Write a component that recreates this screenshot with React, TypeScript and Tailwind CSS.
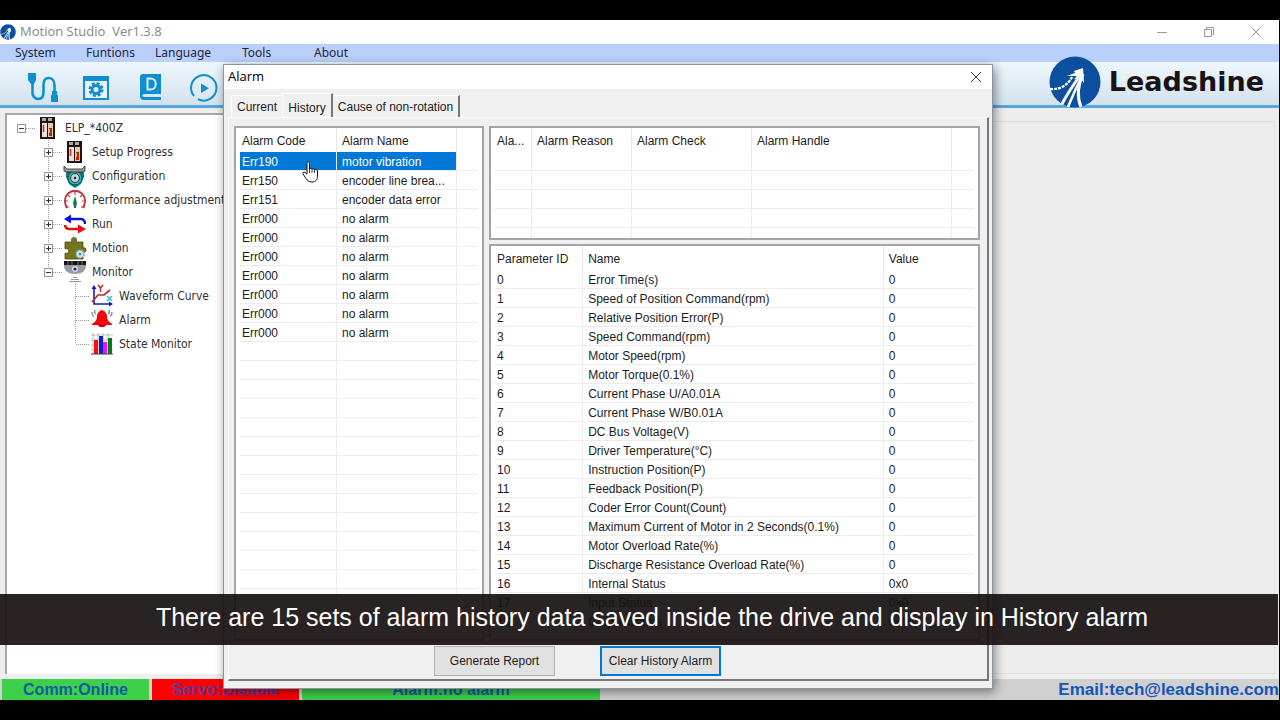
import type { ReactNode } from "react";
import clsx from "clsx";

const menuItems = [
  { label: "System", width: "w-[71px]" },
  { label: "Funtions", width: "w-[69px]" },
  { label: "Language", width: "w-[87px]" },
  { label: "Tools", width: "w-[72px]" },
  { label: "About", width: "w-[72px]" },
];

const alarms = [
  ["Err190", "motor vibration"],
  ["Err150", "encoder line brea..."],
  ["Err151", "encoder data error"],
  ["Err000", "no alarm"],
  ["Err000", "no alarm"],
  ["Err000", "no alarm"],
  ["Err000", "no alarm"],
  ["Err000", "no alarm"],
  ["Err000", "no alarm"],
  ["Err000", "no alarm"],
];

const parameters = [
  ["0", "Error Time(s)", "0"],
  ["1", "Speed of Position Command(rpm)", "0"],
  ["2", "Relative Position Error(P)", "0"],
  ["3", "Speed Command(rpm)", "0"],
  ["4", "Motor Speed(rpm)", "0"],
  ["5", "Motor Torque(0.1%)", "0"],
  ["6", "Current Phase U/A0.01A", "0"],
  ["7", "Current Phase W/B0.01A", "0"],
  ["8", "DC Bus Voltage(V)", "0"],
  ["9", "Driver Temperature(°C)", "0"],
  ["10", "Instruction Position(P)", "0"],
  ["11", "Feedback Position(P)", "0"],
  ["12", "Coder Error Count(Count)", "0"],
  ["13", "Maximum Current of Motor in 2 Seconds(0.1%)", "0"],
  ["14", "Motor Overload Rate(%)", "0"],
  ["15", "Discharge Resistance Overload Rate(%)", "0"],
  ["16", "Internal Status", "0x0"],
  ["17", "Input Status", "0x0"],
  ["18", "Output Status", "0x0"],
];

function LogoMark({ className }: { className: string }) {
  return (
    <svg viewBox="0 0 52 52" className={className} aria-hidden="true">
      <circle cx="26" cy="26" r="25.5" fill="#0b4f9e" />
      <g fill="none" stroke="#fff">
        <path d="M13 48C18 38 25 28 32 18" strokeWidth="3" />
        <path d="M19 51C23 41 28 30 33 20" strokeWidth="2.5" />
        <path d="M32 51C27 39 29 29 34 18" strokeWidth="3" />
        <path d="M1 33C11 34 19 29 23 21" strokeWidth="2.4" strokeDasharray="3 1" />
      </g>
      <path d="M34 12L35 27L31 22L25 23L28 20L18 20L26 17L25 15Z" fill="#fff" />
    </svg>
  );
}

function CableIcon() {
  return (
    <svg viewBox="0 0 30 30" className="h-[30px] w-[30px]" fill="#0f8fd0" aria-hidden="true">
      <path d="M0 0h8v7l-2 4H3L0 7z" />
      <path
        d="M4.500 9v10a6 6 0 0 0 6 7c4 0 5-3 5-7V12c0-5 2-7 5-7s6 2 6 7v8"
        fill="none"
        stroke="#0f8fd0"
        strokeWidth="2.600"
      />
      <path d="M24 18h5v4h1v7h-7v-7h1z" />
    </svg>
  );
}

function SettingsIcon() {
  return (
    <svg viewBox="0 0 28 26" className="h-[26px] w-7" aria-hidden="true">
      <path d="M1 1h26v24H1z" fill="#0f8fd0" />
      <path d="M3 6h22v17H3z" fill="#e6f1f9" />
      <circle cx="14" cy="14.500" r="6" fill="none" stroke="#0f8fd0" strokeWidth="3" strokeDasharray="2.800 1.900" />
      <circle cx="14" cy="14.500" r="4" fill="none" stroke="#0f8fd0" strokeWidth="3" />
    </svg>
  );
}

function BookIcon() {
  return (
    <svg viewBox="0 0 22 27" className="h-[27px] w-[22px]" aria-hidden="true">
      <path d="M3 0h18v20H4c-2 0-2 3 0 3h17v3H4c-3 0-4-2-4-4V3c0-2 1-3 3-3z" fill="#0f8fd0" />
      <path d="M4 21.500h17" stroke="#d8ebf7" strokeWidth="1" />
      <path d="M7.500 4.500h3c7 0 7 11 0 11h-3z" fill="none" stroke="#d8ebf7" strokeWidth="2" />
    </svg>
  );
}

function PlayIcon() {
  return (
    <svg viewBox="0 0 28 28" className="h-7 w-7" aria-hidden="true">
      <path d="M4 22A12.700 12.700 0 1 1 8 25.200" fill="none" stroke="#0f8fd0" strokeWidth="2" />
      <path d="M11 9.500v9.500l8-4.750z" fill="#0f8fd0" />
    </svg>
  );
}

function DriveIcon() {
  return (
    <svg viewBox="0 0 24 24" className="h-6 w-6" aria-hidden="true">
      <path d="M4 1h15v22H4z" fill="#1c1512" />
      <path d="M6 7h5v14H6z" fill="#e8e0dc" />
      <path d="M12 7h5v14h-5z" fill="#d9cfb4" />
      <path d="M6 2h4v3H6zM12 2h4v3h-4z" fill="#aaa" />
      <path d="M7.500 9v7" stroke="#d22" strokeWidth="1.500" />
      <path d="M13 12h3v8h-3z" fill="#c22212" />
      <path d="M13.500 13v4" stroke="#e8b030" />
    </svg>
  );
}

function ConfigIcon() {
  return (
    <svg viewBox="0 0 24 24" className="h-6 w-6" aria-hidden="true">
      <path d="M3 8h18v5l-3 7-6 4-6-4-3-7z" fill="#0d7f80" />
      <circle cx="12" cy="14" r="7" fill="#35b5b5" stroke="#064a4c" />
      <circle cx="12" cy="14" r="4.500" fill="#bcd6d6" stroke="#234" />
      <circle cx="12" cy="14" r="1.200" fill="#223" />
      <path d="M1 2l3 3h15l3-3v5l-3 1H4L1 7z" fill="#9aa0a0" stroke="#222" strokeWidth=".8" />
    </svg>
  );
}

function GaugeIcon() {
  return (
    <svg viewBox="0 0 24 24" className="h-6 w-6" fill="none" aria-hidden="true">
      <path d="M4 20C-1 11 4 3 12 3s13 8 8 17" stroke="#b8323a" strokeWidth="1.800" />
      <path d="M12 3v4M5 7l2 2M19 7l-2 2M2 13h3M22 13h-3M2 19h4M22 19h-4" stroke="#c8404a" strokeWidth="1.200" />
      <path d="M12 8l2 7-1 5h-2l-1-5z" fill="#137a60" />
    </svg>
  );
}

function RunIcon() {
  return (
    <svg viewBox="0 0 24 24" className="h-6 w-6" fill="none" aria-hidden="true">
      <path d="M7 7h11c3 0 4 3 4 5" stroke="#1010e0" strokeWidth="2.400" />
      <path d="M8 2.500v9L1 7z" fill="#1010e0" />
      <path d="M2 13c0 2 2 4 4 4h10" stroke="#e81010" strokeWidth="2.600" />
      <path d="M15 12.500v9l8-4.500z" fill="#e81010" />
    </svg>
  );
}

function PuzzleIcon() {
  return (
    <svg viewBox="0 0 24 24" className="h-6 w-6" aria-hidden="true">
      <path
        d="M2 6h7c-3-6 7-6 4 0h7v6c4-2 4 6 0 4v7H2v-6c5 2 5-6 0-4z"
        fill="#75751b"
        stroke="#4d4d10"
        strokeWidth=".8"
      />
      <circle cx="17" cy="18" r="4" fill="#d6e7ea" stroke="#76a5b5" strokeWidth="1.500" strokeDasharray="2 1" />
      <circle cx="17" cy="18" r="1.500" fill="#5c92a8" />
    </svg>
  );
}

function CameraIcon() {
  return (
    <svg viewBox="0 0 24 24" className="h-6 w-6" aria-hidden="true">
      <path d="M1 5h22c0 6-4 9-11 9S1 11 1 5z" fill="#999ba0" />
      <path d="M1 1h22v4H1z" fill="#181414" />
      <path d="M5 1v4M9 1v4M15 1v4M19 1v4" stroke="#777" />
      <circle cx="12" cy="9" r="2.800" fill="#eee" />
      <circle cx="12" cy="9" r="1.600" fill="#15158a" />
      <path d="M10 17.500h4M8 19.500h8M6 21.500h12" stroke="#999" />
    </svg>
  );
}

function CurveIcon() {
  return (
    <svg viewBox="0 0 24 24" className="h-6 w-6" fill="none" aria-hidden="true">
      <path d="M4 2v18h18" stroke="#1818b8" strokeWidth="1.600" />
      <path d="M1.500 5L4 1l2.500 4zM19 17.500l4 2.500-4 2.500z" fill="#1818b8" />
      <path d="M2 18l6-7h6l6-5" stroke="#c02830" strokeWidth="1.700" />
      <path d="M8 1l2.500 3L13 1M10.500 4v4" stroke="#c02830" strokeWidth="1.500" />
      <path d="M17 12l5 5M22 12l-5 5" stroke="#35c5cc" strokeWidth="1.500" />
    </svg>
  );
}

function BellIcon() {
  return (
    <svg viewBox="0 0 24 24" className="h-6 w-6" aria-hidden="true">
      <path d="M12 2c3 1 5 3 5 7 0 3 2 5 5 7v1H2v-1c3-2 5-4 5-7 0-4 2-6 5-7z" fill="#f00808" />
      <path d="M8 17h8c-1 3-7 3-8 0z" fill="#c00" />
      <path d="M2 4c0 3 1 4 2 4M5 2c-1 2-1 3 1 4M22 4c0 3-1 4-2 4M19 2c1 2 1 3-1 4" fill="none" stroke="#76918e" strokeWidth="1.300" />
    </svg>
  );
}

function BarsIcon() {
  return (
    <svg viewBox="0 0 24 24" className="h-6 w-6" aria-hidden="true">
      <path d="M1 3h22M1 8h22M1 13h22M1 18h22M3 1v22M8 1v22M13 1v22M18 1v22" stroke="#aaa" strokeWidth=".7" />
      <path d="M4 8h4v14H4z" fill="#f01010" />
      <path d="M9 4h4v18H9z" fill="#1a1acc" />
      <path d="M13 10h4v12h-4z" fill="#f010f0" />
      <path d="M18 6h4v16h-4z" fill="#0a7a18" />
      <path d="M1 22h22" stroke="#444" />
    </svg>
  );
}

type Branch = "root" | "plus" | "minus" | "leaf" | "last";

// Dotted connector with the optional [+] / [-] box, one per tree row
function Connector({ branch }: { branch: Branch }) {
  const box = branch === "root" || branch === "plus" || branch === "minus";
  const top = branch === "root" ? 12 : 0;
  const bottom = branch === "root" || branch === "last" || branch === "minus" ? 12 : 24;
  return (
    <svg viewBox="0 0 28 24" className="h-6 w-7 shrink-0" fill="none" aria-hidden="true">
      <path d={`M13.500 ${top}V${bottom}M14 12.500H28`} stroke="#999" strokeDasharray="1 1" />
      {box && <path d="M9.500 8.500h8v8h-8z" fill="#fff" stroke="#919191" />}
      {box && <path d="M11 12.500h5" stroke="#334" />}
      {branch === "plus" && <path d="M13.500 10v5" stroke="#334" />}
    </svg>
  );
}

interface TreeRowProps {
  label: string;
  icon: ReactNode;
  branch: Branch;
  indent?: string;
}

function TreeRow({ label, icon, branch, indent }: TreeRowProps) {
  return (
    <li className={clsx("flex h-6 items-center", indent)}>
      <Connector branch={branch} />
      <span className="shrink-0">{icon}</span>
      <span className="pl-[5px] whitespace-nowrap">{label}</span>
    </li>
  );
}

function DeviceTree() {
  return (
    <ul className="pt-[1px] pl-[1px] font-['DejaVu_Sans_Condensed','Noto_Sans',sans-serif] text-[12px] text-[#303030]">
      <TreeRow label="ELP_*400Z" icon={<DriveIcon />} branch="root" />
      <TreeRow label="Setup Progress" icon={<DriveIcon />} branch="plus" indent="pl-[27px]" />
      <TreeRow label="Configuration" icon={<ConfigIcon />} branch="plus" indent="pl-[27px]" />
      <TreeRow label="Performance adjustment" icon={<GaugeIcon />} branch="plus" indent="pl-[27px]" />
      <TreeRow label="Run" icon={<RunIcon />} branch="plus" indent="pl-[27px]" />
      <TreeRow label="Motion" icon={<PuzzleIcon />} branch="plus" indent="pl-[27px]" />
      <TreeRow label="Monitor" icon={<CameraIcon />} branch="minus" indent="pl-[27px]" />
      <TreeRow label="Waveform Curve" icon={<CurveIcon />} branch="leaf" indent="pl-[54px]" />
      <TreeRow label="Alarm" icon={<BellIcon />} branch="leaf" indent="pl-[54px]" />
      <TreeRow label="State Monitor" icon={<BarsIcon />} branch="last" indent="pl-[54px]" />
    </ul>
  );
}

interface GridTableProps {
  label: string;
  columns: { title: string; width: string }[];
  rows: string[][];
  blankRows?: number;
  selected?: number;
  className?: string;
}

function GridTable({ label, columns, rows, blankRows = 0, selected, className }: GridTableProps) {
  const blanks = Array.from({ length: blankRows }, () => columns.map(() => ""));
  return (
    <div className={clsx("overflow-hidden border-2 border-[#a3a3a8] bg-white px-1", className)}>
      <table aria-label={label} className="w-full table-fixed border-separate border-spacing-0 text-left">
        <thead>
          <tr className="h-6">
            {columns.map((column, i) => (
              <th
                key={i}
                className={clsx(
                  "p-0 pt-px font-normal whitespace-nowrap",
                  column.width,
                  i === 0 ? "pl-[2px]" : "pl-[5px]",
                  i < columns.length - 1 && "border-r border-[#e6e6e6]"
                )}
              >
                {column.title}
              </th>
            ))}
          </tr>
        </thead>
        <tbody>
          {[...rows, ...blanks].map((row, r) => (
            <tr key={r} className="h-[19px]">
              {columns.map((_, i) => (
                <td
                  key={i}
                  className={clsx(
                    "h-[19px] border-b border-[#ececec] p-0 pt-[2px] leading-4 whitespace-nowrap",
                    i === 0 ? "pl-[2px]" : "pl-[5px]",
                    i < columns.length - 1 && "border-r",
                    r === selected && i < 2 && "bg-[#0078d7] text-white"
                  )}
                >
                  {row[i]}
                </td>
              ))}
            </tr>
          ))}
        </tbody>
      </table>
    </div>
  );
}

function HandCursor() {
  return (
    <svg viewBox="0 0 17 22" className="absolute top-[96px] left-[78px] h-[22px] w-[17px]" aria-hidden="true">
      <path
        d="M5 13V2.500c0-2 2.500-2 2.500 0V8c.5-1 2.500-1 2.500.5.500-1 2.500-1 2.500.5.500-1 2.500-1 3 .8V15c0 4-2 6-5.500 6S5.500 19.500 4 17.500L1 13c-1-1.500 1-2.500 2-1.500z"
        fill="#fff"
        stroke="#111"
      />
      <path d="M7.500 8v4M10 8.500V12M12.500 9v3" stroke="#111" strokeWidth=".8" />
    </svg>
  );
}

function AlarmDialog() {
  return (
    <section
      role="dialog"
      aria-label="Alarm"
      className="absolute top-16 bottom-[31px] left-[223px] flex w-[770px] flex-col border border-[#8c93a6] bg-[#f0f0f0] text-[12px] text-[#1c1c1c] shadow-[2px_3px_10px_rgba(0,0,0,0.45)]"
    >
      <header className="flex h-6 shrink-0 items-center justify-between bg-white pr-2 pl-1 font-['Open_Sans',sans-serif] text-[13px] text-black">
        <h2>Alarm</h2>
        <button aria-label="Close alarm window" className="p-[2px]">
          <svg viewBox="0 0 12 12" className="h-3 w-3" stroke="#333" aria-hidden="true">
            <path d="M1 1l10 10M11 1L1 11" />
          </svg>
        </button>
      </header>

      <div role="tablist" className="flex h-7 shrink-0 items-end pl-[7px] whitespace-nowrap">
        <button role="tab" aria-selected="false" className="h-[22px] w-[51px] border-t border-l border-[#fafafa]">
          Current
        </button>
        <button role="tab" aria-selected="true" className="h-6 w-[51px] border-t border-r-2 border-l border-t-white border-r-[#77777b] border-l-white pt-1">
          History
        </button>
        <button role="tab" aria-selected="false" className="h-[22px] w-[127px] border-t border-r-2 border-t-white border-r-[#77777b]">
          Cause of non-rotation
        </button>
      </div>

      <div className="mr-[3px] mb-[7px] ml-1 flex min-h-0 flex-1 flex-col border-t border-r-2 border-b-2 border-l border-t-white border-r-[#77777b] border-b-[#77777b] border-l-white pt-2 pr-[7px] pl-[5px]">
        <div className="flex min-h-0 flex-1 gap-[5px]">
          <GridTable
            label="Alarm history"
            className="w-[250px] shrink-0"
            columns={[
              { title: "Alarm Code", width: "w-[97px]" },
              { title: "Alarm Name", width: "w-[120px]" },
              { title: "", width: "w-auto" },
            ]}
            rows={alarms}
            blankRows={16}
            selected={0}
          />
          <div className="flex min-w-0 flex-1 flex-col gap-1">
            <GridTable
              label="Alarm details"
              className="h-[114px] shrink-0"
              columns={[
                { title: "Ala...", width: "w-[37px]" },
                { title: "Alarm Reason", width: "w-[100px]" },
                { title: "Alarm Check", width: "w-[120px]" },
                { title: "Alarm Handle", width: "w-[200px]" },
                { title: "", width: "w-auto" },
              ]}
              rows={[]}
              blankRows={5}
            />
            <GridTable
              label="Alarm parameters"
              className="min-h-0 flex-1"
              columns={[
                { title: "Parameter ID", width: "w-[88px]" },
                { title: "Name", width: "w-[300px]" },
                { title: "Value", width: "w-[90px]" },
              ]}
              rows={parameters}
            />
          </div>
        </div>
        <footer className="flex shrink-0 justify-center gap-[45px] pt-[5px] pr-[59px] pb-[3px]">
          <button className="h-[30px] w-[121px] border border-[#b0b0b0] bg-[#e1e1e1]">Generate Report</button>
          <button className="h-[30px] w-[121px] border-2 border-[#0078d7] bg-[#e1e1e1] whitespace-nowrap">
            Clear History Alarm
          </button>
        </footer>
      </div>
      <HandCursor />
    </section>
  );
}

export default function App() {
  return (
    <div className="relative flex h-screen flex-col overflow-hidden bg-black py-5 font-['Liberation_Sans',Arial,sans-serif]">
      <div className="flex min-h-0 flex-1 flex-col border-r border-black bg-[#ededed]">
        <header className="flex h-6 shrink-0 items-center bg-white">
          <LogoMark className="h-4 w-4" />
          <h1 className="pl-1 font-['Open_Sans',sans-serif] text-[13px] whitespace-pre text-[#858585]">
            {"Motion Studio  Ver1.3.8"}
          </h1>
          <div className="ml-auto flex">
            <button aria-label="Minimize" className="flex w-[47px] justify-center">
              <svg viewBox="0 0 12 12" className="h-3 w-3" stroke="#999" aria-hidden="true">
                <path d="M1 6.500h10" />
              </svg>
            </button>
            <button aria-label="Restore" className="flex w-[47px] justify-center">
              <svg viewBox="0 0 12 12" className="h-3 w-3" fill="none" stroke="#999" aria-hidden="true">
                <path d="M1.500 3.500h7v7h-7zM3.500 3.500v-2h7v7h-2" />
              </svg>
            </button>
            <button aria-label="Close" className="flex w-[47px] justify-center">
              <svg viewBox="0 0 12 12" className="h-3 w-3" stroke="#999" aria-hidden="true">
                <path d="M1 1l10 10M11 1L1 11" />
              </svg>
            </button>
          </div>
        </header>

        <nav className="flex h-[18px] shrink-0 items-center bg-[#b9d0fb] pl-[15px] font-['Noto_Sans',sans-serif] text-[12px] text-[#1d2440]">
          {menuItems.map((item) => (
            <button key={item.label} className={clsx("text-left", item.width)}>
              {item.label}
            </button>
          ))}
        </nav>

        <div className="flex h-[46px] shrink-0 items-center border-b-[3px] border-[#58a6dc] bg-linear-to-b from-[#eff7fd] to-[#d3e2ed] pt-2 pr-[15px] pl-7">
          <div className="flex flex-1 items-center">
            <button aria-label="Connect" className="w-[54px]">
              <CableIcon />
            </button>
            <button aria-label="Settings" className="w-[58px]">
              <SettingsIcon />
            </button>
            <button aria-label="Manual" className="w-[50px]">
              <BookIcon />
            </button>
            <button aria-label="Run">
              <PlayIcon />
            </button>
          </div>
          <div className="relative z-10 -mt-3 flex items-center gap-2">
            <LogoMark className="h-[52px] w-[52px]" />
            <span className="font-['DejaVu_Sans',sans-serif] text-[27px] leading-8 font-bold text-[#1a1214]">
              Leadshine
            </span>
          </div>
        </div>

        <main className="flex min-h-0 flex-1 gap-2 pt-[5px] pr-1 pb-[5px] pl-[5px]">
          <div className="w-[220px] shrink-0 overflow-hidden border-t-2 border-l-2 border-[#a9a9ac] bg-white">
            <DeviceTree />
          </div>
          <div className="mt-2 flex-1 border border-[#dfdfdf]" />
        </main>

        <footer className="flex h-[21px] shrink-0 items-center gap-[3px] bg-[#d0d0d0] pl-[2px] text-[16px] leading-[21px] font-bold text-[#0f5aa8]">
          <span className="w-[147px] bg-[#3ed04a] text-center">Comm:Online</span>
          <span className="w-[147px] bg-[#fe0000] text-center text-[#5a3a9c]">Servo:Disable</span>
          <span className="w-[298px] bg-[#3ed04a] text-center">Alarm:no alarm</span>
          <a href="mailto:tech@leadshine.com" className="ml-auto text-[17px] text-[#1255b8]">
            Email:tech@leadshine.com
          </a>
        </footer>
      </div>

      <AlarmDialog />

      <p className="absolute right-[2px] bottom-[75px] left-0 h-[51px] bg-[#171010]/92 pl-[26px] text-center text-[25px] leading-[46px] whitespace-nowrap text-white">
        There are 15 sets of alarm history data saved inside the drive and display in History alarm
      </p>
    </div>
  );
}
